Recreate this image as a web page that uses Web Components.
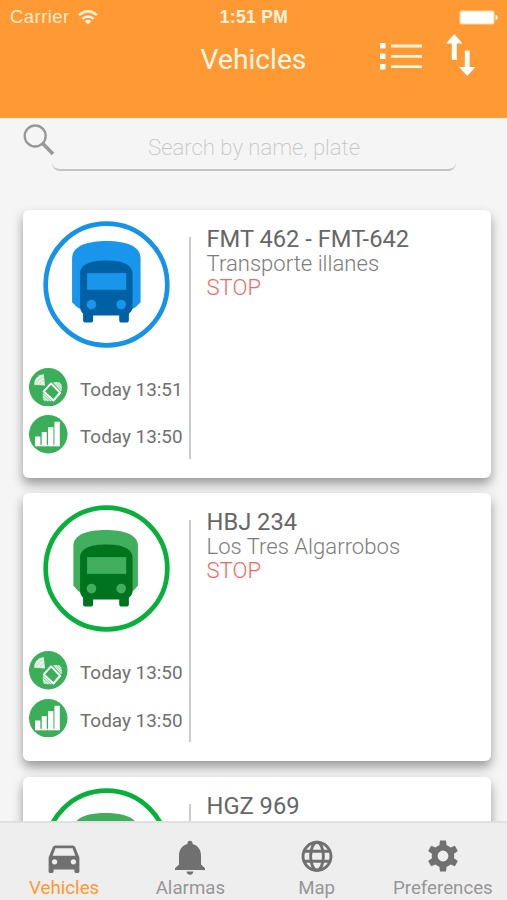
<!DOCTYPE html>
<html lang="en">
<head>
<meta charset="utf-8">
<title>Vehicles</title>
<style>
  html, body { height: 100%; margin: 0; }
  body {
    overflow: hidden;
    background: #f5f5f5;
    font-family: Roboto, "Liberation Sans", sans-serif;
  }
</style>
</head>
<body>
<fleet-app>
  <status-bar slot="header" carrier="Carrier" time="1:51 PM"></status-bar>
  <nav-bar slot="header">Vehicles</nav-bar>
  <search-box placeholder="Search by name, plate"></search-box>
  <vehicle-card type="blue" plate="FMT 462 - FMT-642" gps="Today 13:51" signal="Today 13:50" state="STOP">Transporte illanes</vehicle-card>
  <vehicle-card plate="HBJ 234" gps="Today 13:50" signal="Today 13:50" state="STOP">Los Tres Algarrobos</vehicle-card>
  <vehicle-card plate="HGZ 969"></vehicle-card>
  <tab-item slot="tabs" icon="car" active>Vehicles</tab-item>
  <tab-item slot="tabs" icon="bell">Alarmas</tab-item>
  <tab-item slot="tabs" icon="globe">Map</tab-item>
  <tab-item slot="tabs" icon="gear">Preferences</tab-item>
</fleet-app>

<script>
class FleetApp extends HTMLElement {
  constructor() {
    super();
    this.attachShadow({ mode: "open" });
  }

  connectedCallback() {
    this.shadowRoot.innerHTML = `
      <style>
        :host { display: flex; flex-direction: column; height: 100vh; overflow: hidden; }
        header { flex: none; height: 118px; background: #ff9933; }
        main {
          flex: 1;
          min-height: 0;
          overflow: hidden;
          display: flex;
          flex-direction: column;
          gap: 15.5px;
          padding: 0 16px 0 22.5px;
        }
        footer {
          flex: none;
          height: 79px;
          box-sizing: border-box;
          display: grid;
          grid-template-columns: repeat(4, 1fr);
          padding: 0 1px;
          background: #eeeeee;
          border-top: 2px solid #e0e0e0;
        }
      </style>
      <header><slot name="header"></slot></header>
      <main><slot></slot></main>
      <footer><slot name="tabs"></slot></footer>
    `;
  }
}

class StatusBar extends HTMLElement {
  constructor() {
    super();
    this.attachShadow({ mode: "open" });
  }

  connectedCallback() {
    this.shadowRoot.innerHTML = `
      <style>
        :host {
          display: grid;
          grid-template-columns: 1fr auto 1fr;
          align-items: center;
          height: 34px;
          padding: 0 9px 0 10px;
          color: #fff4e0;
          font: 18.5px/34px "Liberation Sans", Arial, sans-serif;
        }
        .left { display: flex; align-items: center; gap: 8px; letter-spacing: 0.45px; color: #ffeccb; }
        .time { font-weight: bold; font-size: 17.5px; letter-spacing: 0.35px; padding-top: 1px; line-height: 33px; }
        .battery { justify-self: end; }
        svg { display: block; }
      </style>
      <span class="left"><span>${this.getAttribute("carrier")}</span>
        <svg width="20" height="15" viewBox="0 0 20 15" fill="none" stroke="#fff4e0" stroke-width="2.3">
          <path d="M1 5.2Q10-2.6 19 5.2M4.3 8.9Q10 4 15.7 8.9"/>
          <path d="M6.6 11.2Q10 8.2 13.4 11.2L10 14.6Z" fill="#fff4e0" stroke="none"/>
        </svg>
      </span>
      <span class="time">${this.getAttribute("time")}</span>
      <svg class="battery" width="39" height="15" viewBox="0 0 39 15">
        <rect x="0.5" y="0.5" width="35" height="14" rx="2" fill="#ffd9a8"/>
        <rect x="1.5" y="1.5" width="33" height="12" rx="1" fill="#fff"/>
        <path d="M36.5 4.5Q39 5.5 39 7.5T36.5 10.5Z" fill="#fff0da"/>
      </svg>
    `;
  }
}

class NavBar extends HTMLElement {
  constructor() {
    super();
    this.attachShadow({ mode: "open" });
  }

  connectedCallback() {
    this.shadowRoot.innerHTML = `
      <style>
        :host {
          display: grid;
          grid-template-columns: 1fr auto 1fr;
          height: 52px;
          padding: 0 31px;
          color: #fff8e8;
        }
        h1 { grid-column: 2; margin: 0; font-weight: 400; font-size: 28.2px; line-height: 52px; }
        .actions { display: flex; justify-content: flex-end; align-items: flex-start; gap: 24px; }
        .list { margin-top: 9px; }
        svg { display: block; }
      </style>
      <h1><slot></slot></h1>
      <div class="actions">
        <svg class="list" width="42" height="27" viewBox="0 0 42 27" fill="#fff4dc">
          <path d="M0 0h5.5v5.5H0zM0 10.5h5.5V16H0zM0 21h5.5v5.5H0z" fill="#fff"/>
          <path d="M11 1.6h31v2.8H11zM11 12h31v2.8H11zM11 22.3h31v2.8H11z"/>
        </svg>
        <svg width="30" height="42" viewBox="0 0 30 42" fill="#fff">
          <path d="M8.3 0L16.5 9.5H10.8V26H5.8V9.5H0Z"/>
          <path d="M21.2 42L13 33H18.8V16.5H23.6V33H29.5Z"/>
        </svg>
      </div>
    `;
  }
}

class SearchBox extends HTMLElement {
  constructor() {
    super();
    this.attachShadow({ mode: "open" });
  }

  connectedCallback() {
    this.shadowRoot.innerHTML = `
      <style>
        :host { display: flex; flex: none; height: 76.4px; }
        svg { flex: none; display: block; margin-top: 6px; }
        .field {
          width: 404px;
          height: 36px;
          margin: 15px 0 0 -2.5px;
          border-bottom: 2px solid #c4c4c4;
          border-radius: 0 0 8px 8px;
          text-align: center;
          color: #c4c4c4;
          font-weight: 200;
          font-size: 22.2px;
          line-height: 29px;
        }
      </style>
      <svg width="32" height="32" viewBox="0 0 32 32" fill="none" stroke="#989898">
        <circle cx="12.2" cy="12" r="10.5" stroke-width="2.3"/>
        <path d="M19.8 19.5L30 30" stroke-width="3.6"/>
      </svg>
      <div class="field">${this.getAttribute("placeholder")}</div>
    `;
  }
}

class VehicleBadge extends HTMLElement {
  constructor() {
    super();
    this.attachShadow({ mode: "open" });
  }

  connectedCallback() {
    const themes = {
      blue: {
        ring: "#1693e8",
        back: "#1796ec",
        front: "#0060a4",
        shape: "M87 112C87 76 130 60 190 60S292 76 292 112V243Q280 258 262 266H117Q99 258 87 243Z",
      },
      green: {
        ring: "#06b03a",
        back: "#41ae5e",
        front: "#00731f",
        shape: "M91 122C91 88 135 75 187 75S284 88 284 122V241Q274 256 258 266H117Q101 256 91 241Z",
      },
    };
    const theme = themes[this.getAttribute("type")] || themes.green;

    this.shadowRoot.innerHTML = `
      <style>
        :host { display: block; width: 127px; height: 127px; }
        svg { display: block; width: 100%; height: 100%; }
      </style>
      <svg viewBox="0 0 380 380">
        <circle cx="190" cy="190" r="182" fill="#fff" stroke="${theme.ring}" stroke-width="14"/>
        <path d="${theme.shape}" fill="${theme.back}"/>
        <path d="M111 158C111 128 145 118 189 118S268 128 268 158V256Q268 270 257 277V296Q257 304 249 304H236Q228 304 228 296V283H150V296Q150 304 142 304H128Q120 304 120 296V277Q111 270 111 256Z" fill="${theme.front}"/>
        <rect x="132" y="156" width="117" height="50" fill="${theme.back}"/>
        <circle cx="145" cy="250" r="14.5" fill="${theme.back}"/>
        <circle cx="234" cy="250" r="14.5" fill="${theme.back}"/>
      </svg>
    `;
  }
}

class StatusRow extends HTMLElement {
  constructor() {
    super();
    this.attachShadow({ mode: "open" });
  }

  connectedCallback() {
    const icons = {
      gps: `
        <path d="M15 50Q17 23 44 18L48 52Z" fill="#e4f5e6"/>
        <path d="M23 50Q26 32 45 27M31 51Q34 40 46 36" fill="none" stroke="#a9dab2" stroke-width="2"/>
        <path d="M72 42L88 42L98 52L98 68ZM41 76L41 92L51 99L67 99Z" fill="#8fd09b"/>
        <path d="M44 70L66 46L93 74L73 97Z" fill="#3aae58" stroke="#fff" stroke-width="6" stroke-linejoin="round"/>
        <path d="M74 43L97 68M80 42L98 60M88 43L97 52M42 77L67 99M42 85L58 99M43 93L49 98" stroke="#e4f5e6" stroke-width="3.5"/>`,
      signal: `
        <path d="M18 64H34V93H18ZM38 51H53V93H38ZM57 36H73V93H57ZM76 20H92V93H76Z" fill="#fff"/>
        <path d="M18 91H92" stroke="#fff" stroke-width="4"/>`,
    };

    this.shadowRoot.innerHTML = `
      <style>
        :host {
          display: flex;
          gap: 12.5px;
          color: #707070;
          font-size: 18.9px;
          line-height: 44px;
          height: 38.5px;
          white-space: nowrap;
        }
        svg { flex: none; display: block; width: 38.5px; height: 38.5px; }
      </style>
      <svg viewBox="0 0 115 115">
        <circle cx="57.5" cy="57.5" r="57.5" fill="#3aae58"/>
        ${icons[this.getAttribute("icon")]}
      </svg>
      <span><slot></slot></span>
    `;
  }
}

class VehicleCard extends HTMLElement {
  constructor() {
    super();
    this.attachShadow({ mode: "open" });
  }

  connectedCallback() {
    this.shadowRoot.innerHTML = `
      <style>
        :host {
          display: flex;
          flex: none;
          height: 268px;
          box-sizing: border-box;
          background: #fff;
          border-radius: 6px;
          box-shadow: 0 6px 11px rgba(0, 0, 0, 0.38);
        }
        .summary { width: 166.5px; padding: 11.2px 0 0 6.5px; box-sizing: border-box; }
        vehicle-badge { margin: 0 0 19.8px 14px; }
        .rows { display: grid; gap: 9px; }
        .line { flex: none; width: 2px; height: 222px; margin-top: 27px; background: #cccccc; }
        .info { padding: 17px 0 0 15.5px; font-size: 22.1px; line-height: 24px; }
        .plate { color: #666666; font-size: 23.7px; }
        .name { color: #7c7c7c; font-weight: 300; }
        .state { color: #f4685f; font-weight: 300; }
      </style>
      <div class="summary">
        <vehicle-badge type="${this.getAttribute("type") || "green"}"></vehicle-badge>
        ${this.hasAttribute("gps") ? `
        <div class="rows">
          <status-row icon="gps">${this.getAttribute("gps")}</status-row>
          <status-row icon="signal">${this.getAttribute("signal")}</status-row>
        </div>` : ""}
      </div>
      <div class="line"></div>
      <div class="info">
        <div class="plate">${this.getAttribute("plate")}</div>
        <div class="name"><slot></slot></div>
        <div class="state">${this.getAttribute("state") || ""}</div>
      </div>
    `;
  }
}

class TabItem extends HTMLElement {
  constructor() {
    super();
    this.attachShadow({ mode: "open" });
  }

  connectedCallback() {
    const tooth = "M12.2 7L13 .6H19L19.8 7Z";
    const icons = {
      car: `<path fill-rule="evenodd" d="M7.5 5.5H24.5Q26.7 5.5 27.3 7.3L31.4 17.5V31.5Q31.4 33.1 29.8 33.1H28Q26.4 33.1 26.4 31.5V29.5H5.6V31.5Q5.6 33.1 4 33.1H2.2Q.6 33.1 .6 31.5V17.5L4.7 7.3Q5.3 5.5 7.5 5.5ZM7.4 8.3L4.7 15.7H27.3L24.6 8.3ZM6.6 19.2A2.6 2.6 0 1 0 6.6 24.4A2.6 2.6 0 1 0 6.6 19.2ZM25.4 19.2A2.6 2.6 0 1 0 25.4 24.4A2.6 2.6 0 1 0 25.4 19.2Z"/>`,
      bell: `<path d="M16 .8Q18.6 .8 18.6 4C24.5 5.7 27 10.5 27 15.5V24.5L31 28.2V30H1V28.2L5 24.5V15.5C5 10.5 7.5 5.7 13.4 4Q13.4 .8 16 .8ZM12.6 31.6H19.4Q18.8 34.8 16 34.8T12.6 31.6Z"/>`,
      globe: `<g fill="none" stroke="#707070" stroke-width="2.9">
          <circle cx="16" cy="16.3" r="14"/>
          <ellipse cx="16" cy="16.3" rx="6.4" ry="14"/>
          <path d="M3 11.3H29M3 21.3H29"/>
        </g>`,
      gear: `${[0, 60, 120, 180, 240, 300].map((angle) => `<path d="${tooth}" transform="rotate(${angle} 16 16)"/>`).join("")}
        <circle cx="16" cy="16" r="8.3" fill="none" stroke="#707070" stroke-width="5.8"/>`,
    };

    this.shadowRoot.innerHTML = `
      <style>
        :host {
          display: flex;
          flex-direction: column;
          align-items: center;
          padding-top: 17px;
          color: #969696;
          font-size: 18.7px;
          line-height: 22px;
        }
        :host([active]) { color: #ff9933; }
        svg { display: block; margin-bottom: 1px; }
      </style>
      <svg width="32" height="36" viewBox="0 0 32 36" fill="#707070">${icons[this.getAttribute("icon")]}</svg>
      <span><slot></slot></span>
    `;
  }
}

customElements.define("fleet-app", FleetApp);
customElements.define("status-bar", StatusBar);
customElements.define("nav-bar", NavBar);
customElements.define("search-box", SearchBox);
customElements.define("vehicle-badge", VehicleBadge);
customElements.define("status-row", StatusRow);
customElements.define("vehicle-card", VehicleCard);
customElements.define("tab-item", TabItem);
</script>
</body>
</html>
